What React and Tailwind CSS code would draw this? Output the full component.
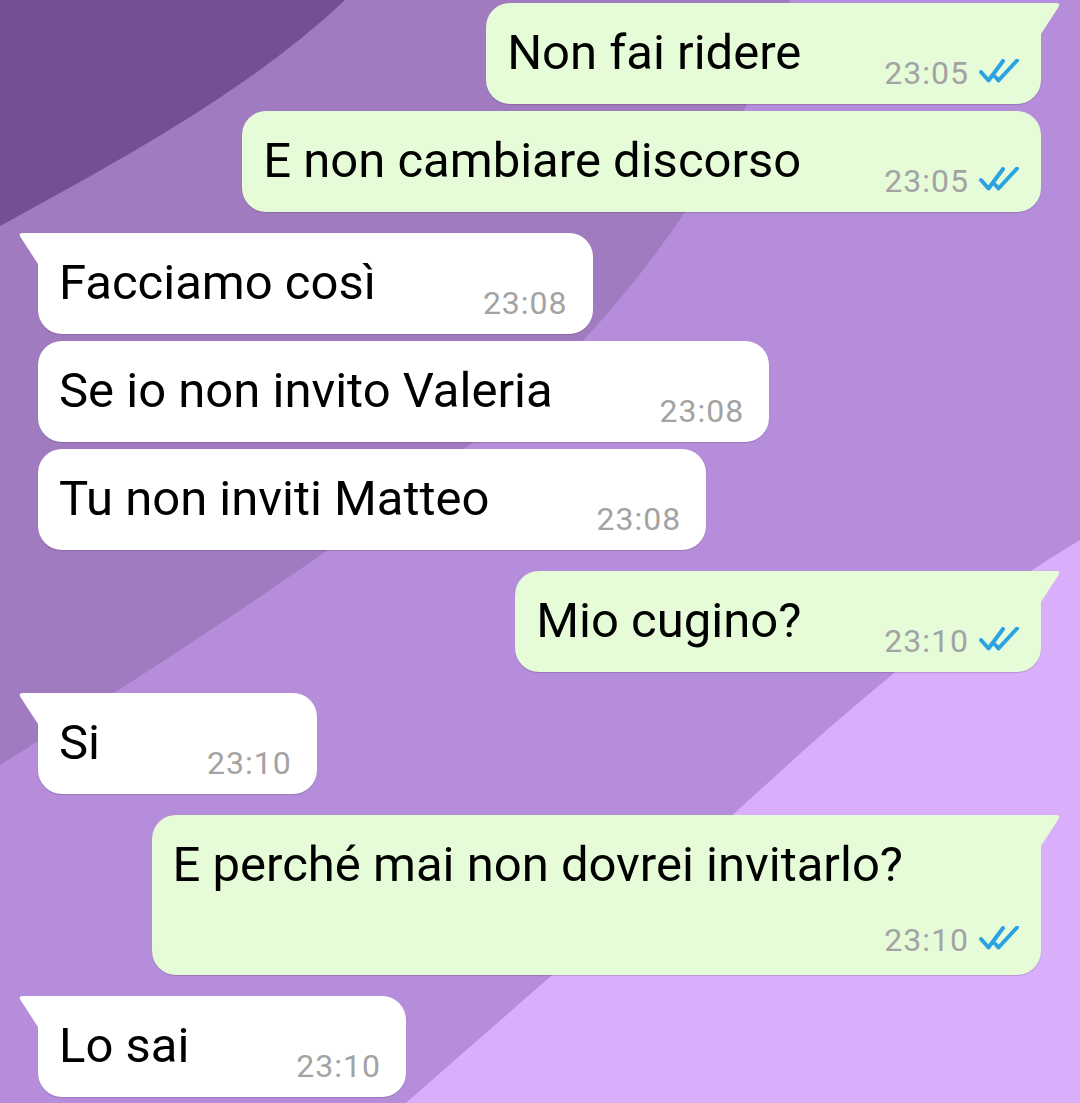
import React from "react";

const messages = [
  { out: true, text: "Non fai ridere", time: "23:05", tail: true },
  { out: true, text: "E non cambiare discorso", time: "23:05" },
  { out: false, text: "Facciamo così", time: "23:08", tail: true },
  { out: false, text: "Se io non invito Valeria", time: "23:08" },
  { out: false, text: "Tu non inviti Matteo", time: "23:08" },
  { out: true, text: "Mio cugino?", time: "23:10", tail: true },
  { out: false, text: "Si", time: "23:10", tail: true },
  { out: true, text: "E perché mai non dovrei invitarlo?", time: "23:10", tail: true, wrap: true },
  { out: false, text: "Lo sai", time: "23:10", tail: true }
];

const ReadTicks = () => (
  <svg width="40" height="25" viewBox="0 0 40 25" className="ml-[10px] mb-[7px] shrink-0" fill="none">
    <path
      d="M2 13 L9.5 21.5 L24 2 M16.5 18 L19.5 21.5 L38 1.5"
      stroke="#2ba3e3"
      strokeWidth="4"
      strokeLinecap="round"
      strokeLinejoin="round"
    />
  </svg>
);

const Wallpaper = () => (
  <svg className="absolute inset-0 h-full w-full" viewBox="0 0 1080 1103" preserveAspectRatio="none">
    <rect width="1080" height="1103" fill="#b58dda" />
    <path d="M0 0 L790 0 C740 150 640 300 500 420 C380 520 200 640 0 765 Z" fill="#a17bc0" />
    <path d="M0 0 L345 0 C250 90 120 160 0 226 Z" fill="#744f92" />
    <path d="M1080 540 C980 600 880 680 760 790 C640 900 500 1020 406 1103 L1080 1103 Z" fill="#d9affc" />
  </svg>
);

const Tail = ({ out, color }) =>
  out ? (
    <svg className="absolute left-full top-0" width="20" height="31" viewBox="0 0 20 31">
      <path d="M0 0 L15 0 Q20 0 17.5 4 L0 31 Z" fill={color} />
    </svg>
  ) : (
    <svg className="absolute right-full top-0" width="20" height="31" viewBox="0 0 20 31">
      <path d="M20 0 L5 0 Q0 0 2.5 4 L20 31 Z" fill={color} />
    </svg>
  );

const Bubble = ({ m, first }) => {
  const color = m.out ? "#e6fcd8" : "#ffffff";
  const spacing = first ? "mt-[3px]" : m.tail ? "mt-[21px]" : "mt-[7px]";
  const side = m.out ? "self-end mr-[39px] bg-[#e6fcd8]" : "self-start ml-[38px] bg-white";
  const corner = m.tail ? (m.out ? "rounded-tr-none" : "rounded-tl-none") : "";
  const time = (
    <span className="text-[32px] leading-[36px] tracking-[1px] text-[#a3a3a3] shrink-0">{m.time}</span>
  );

  if (m.wrap) {
    return (
      <div className={`relative ${spacing} ${side} ${corner} rounded-[24px] shadow-[0_1px_1px_rgba(0,0,0,0.16)] pl-[21px] pr-[22px] pt-[22px] pb-[17px] flex flex-col`}>
        {m.tail && <Tail out={m.out} color={color} />}
        <span className="text-[49px] leading-[56px] text-black pr-[116px] whitespace-nowrap">{m.text}</span>
        <div className="mt-[29px] flex items-end justify-end">
          {time}
          <ReadTicks />
        </div>
      </div>
    );
  }

  return (
    <div className={`relative ${spacing} ${side} ${corner} rounded-[24px] shadow-[0_1px_1px_rgba(0,0,0,0.16)] pl-[21px] ${m.out ? "pr-[22px]" : "pr-[25px]"} pt-[22px] pb-[13px] flex items-end`}>
      {m.tail && <Tail out={m.out} color={color} />}
      <span className={`text-[49px] leading-[56px] mb-[10px] text-black whitespace-nowrap ${m.out ? "mr-[83px]" : "mr-[107px]"}`}>
        {m.text}
      </span>
      {time}
      {m.out && <ReadTicks />}
    </div>
  );
};

export default function App() {
  return (
    <div className="relative h-[1103px] w-full overflow-hidden font-['Roboto',sans-serif]">
      <Wallpaper />
      <div className="relative flex flex-col">
        {messages.map((m, i) => (
          <Bubble key={i} m={m} first={i === 0} />
        ))}
      </div>
    </div>
  );
}
